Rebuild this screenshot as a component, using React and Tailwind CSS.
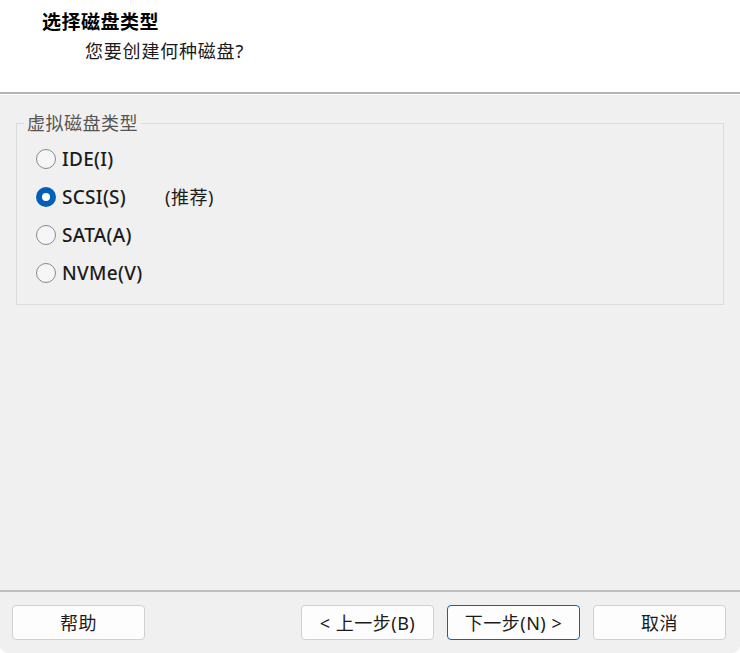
import React from "react";

const cjk = { fontFamily: '"Noto Sans", "Noto Sans CJK SC", sans-serif' };

function Radio({ checked, label, extra }) {
  return (
    <div className="flex h-[38px] items-center">
      {checked ? (
        <span className="flex h-[20px] w-[20px] items-center justify-center rounded-full bg-[#005fb8]">
          <span className="h-[8px] w-[8px] rounded-full bg-white" />
        </span>
      ) : (
        <span className="h-[20px] w-[20px] rounded-full border border-[#8a8a8a] bg-[#f6f6f6]" />
      )}
      <span className="ml-[6px] text-[19px] font-medium leading-none tracking-[0.3px] text-[#1b1b1b]">{label}</span>
      {extra && (
        <span className="absolute left-[129px] text-[18px] leading-none tracking-[0.5px] text-[#1b1b1b]">{extra}</span>
      )}
    </div>
  );
}

function Btn({ children, primary }) {
  return (
    <button
      className={
        "flex h-[35px] w-[133px] items-center justify-center rounded-[4px] border bg-[#fdfdfd] text-[18px] leading-none tracking-[0.5px] text-[#1b1b1b] " +
        (primary ? "border-[#0067c0]" : "border-[#d0d0d0]")
      }
    >
      {children}
    </button>
  );
}

export default function App() {
  return (
    <div className="h-[653px] w-[740px] overflow-hidden bg-white" style={cjk}>
      <div className="flex h-[653px] flex-col overflow-hidden rounded-b-[8px] bg-[#f0f0f0]">
        <div className="h-[92px] bg-white pl-[42px] pt-[10px]">
          <div className="text-[19px] font-bold leading-[24px] tracking-[0.5px] text-black">选择磁盘类型</div>
          <div className="ml-[43px] mt-[5px] text-[18px] leading-[24px] tracking-[0.8px] text-[#1b1b1b]">您要创建何种磁盘?</div>
        </div>
        <div className="h-[2px] bg-[#b4b4b4]" />
        <div className="h-[1px] bg-white" />
        <div className="flex-1">
          <div className="relative mx-4 mt-[28px] border border-[#dcdcdc] pb-[12px] pl-[19px] pt-[16px]">
            <span className="absolute left-[7px] top-[-13px] bg-[#f0f0f0] px-[3px] text-[18px] leading-[24px] tracking-[0.5px] text-[#555]">
              虚拟磁盘类型
            </span>
            <div className="relative">
              <Radio label="IDE(I)" />
              <Radio checked label="SCSI(S)" extra="(推荐)" />
              <Radio label="SATA(A)" />
              <Radio label="NVMe(V)" />
            </div>
          </div>
        </div>
        <div className="h-[2px] bg-[#c0c0c0]" />
        <div className="flex h-[61px] items-start pl-[12px] pr-[14px] pt-[13px]">
          <Btn>帮助</Btn>
          <div className="flex-1" />
          <div className="flex gap-[13px]">
            <Btn>&lt; 上一步(B)</Btn>
            <Btn primary>下一步(N) &gt;</Btn>
            <Btn>取消</Btn>
          </div>
        </div>
      </div>
    </div>
  );
}
